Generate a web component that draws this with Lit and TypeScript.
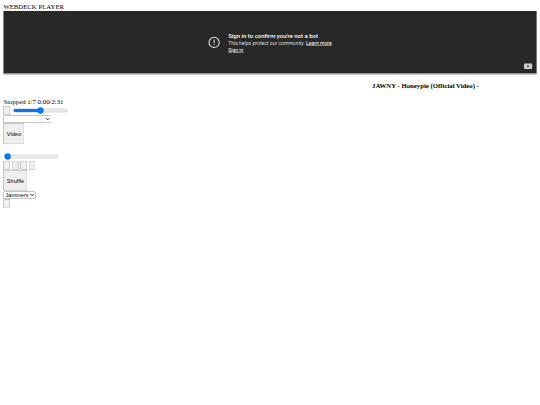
import { LitElement, html, css } from "lit";
import { customElement } from "lit/decorators.js";

@customElement("app-root")
export class AppRoot extends LitElement {
  static styles = css`
    :host { display: block; width: 540px; height: 405px; overflow: hidden; background: #fff; }
    .page { box-sizing: border-box; width: 1280px; height: 960px; padding: 8px 8px 0; transform: scale(0.421875); transform-origin: 0 0; opacity: 0.999; font-family: "Liberation Serif", serif; font-size: 16px; color: #000; }
    .frame { background: #282828; height: 150px; box-sizing: border-box; display: flex; align-items: center; justify-content: center; position: relative; font-family: "Roboto", "Liberation Sans", sans-serif; color: #fff; border-left: 1px solid #999; border-bottom: 2px solid #d8d8d8; }
    .msg { display: flex; align-items: center; gap: 19px; margin-left: -2px; }
    .msg svg { width: 29px; height: 29px; display: block; }
    .m1 { font-size: 14.2px; font-weight: 500; line-height: 21px; }
    .m2 { font-size: 12px; line-height: 16px; color: #ddd; }
    .m2 a { color: #fff; text-decoration: underline; }
    .yt { position: absolute; right: 10px; bottom: 10px; width: 20px; height: 14px; }
    .title { font-weight: bold; margin: 19px 0 20px 874px; line-height: 18px; }
    button { font-family: "Liberation Sans", sans-serif; font-size: 13.33px; box-sizing: border-box; margin: 0; vertical-align: middle; }
    .btn { width: 16px; height: 22px; padding: 0; }
    .tall { display: block; height: 50px; padding: 0 6px; }
    select { display: block; margin: 0; font-family: "Liberation Sans", sans-serif; font-size: 13.33px; }
    input.r1 { margin: 2px 2px 2px 7px; vertical-align: middle; }
    input.r2 { display: block; margin: 21px 0 2px 2px; }
    .sel1 { width: 114px; height: 19px; }
    .row { display: flex; gap: 4px; }
  `;

  render() {
    return html`<div class="page">
      <div class="head">WEBDECK PLAYER</div>
      <div class="frame">
        <div class="msg">
          <svg viewBox="0 0 24 24" fill="none" stroke="#e8e8e8" stroke-width="2"><circle cx="12" cy="12" r="10"></circle><path d="M12 6.5v7M12 15.5v2"></path></svg>
          <div>
            <div class="m1">Sign in to confirm you're not a bot</div>
            <div class="m2">This helps protect our community. <a>Learn more</a><br /><a>Sign in</a></div>
          </div>
        </div>
        <svg class="yt" viewBox="0 0 20 14"><rect width="20" height="14" rx="3.5" fill="#ccc"></rect><path d="M8 4 13 7 8 10z" fill="#282828"></path></svg>
      </div>
      <div class="title">JAWNY - Honeypie (Official Video) -</div>
      <div>Stopped 1/7 0:00/2:31</div>
      <div><button class="btn"></button><input class="r1" type="range" min="0" max="100" value="50" /></div>
      <select class="sel1"></select>
      <button class="tall">Video</button>
      <input class="r2" type="range" min="0" max="100" value="0" />
      <div class="row"><button class="btn"></button><button class="btn"></button><button class="btn"></button><button class="btn"></button></div>
      <button class="tall">Shuffle</button>
      <select><option>Jammers</option></select>
      <button class="btn"></button>
    </div>`;
  }
}
